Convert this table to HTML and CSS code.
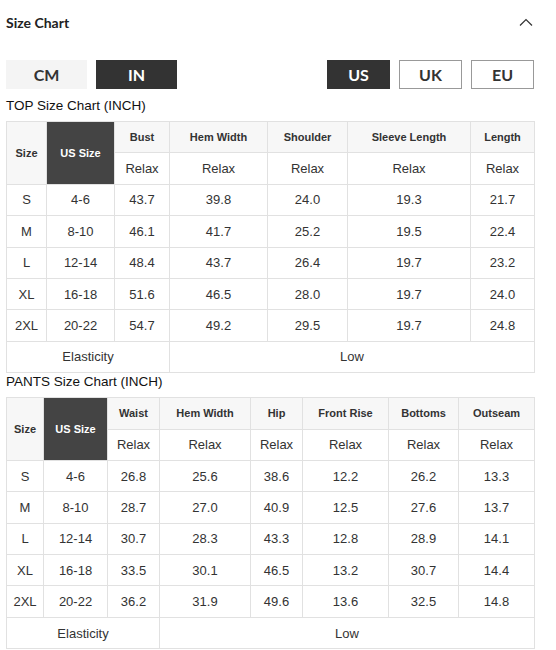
FILE: index.html
```html
<!DOCTYPE html>
<html>
  <head>
    <meta name="viewport" content="width=device-width, initial-scale=1.0">
    <link rel="stylesheet" href="styles.css">
  </head>
  <body>
    <div class="size-chart">
      <div class="chart-head">
        <span class="chart-title">Size Chart</span>
        <svg class="chevron" width="14" height="8" viewBox="0 0 14 8">
          <polyline points="1,7.5 7,1.5 13,7.5" fill="none" stroke="#333" stroke-width="1.2"/>
        </svg>
      </div>

      <div class="toggles">
        <div class="group">
          <button class="unit">CM</button>
          <button class="unit on">IN</button>
        </div>
        <div class="group">
          <button class="region on">US</button>
          <button class="region">UK</button>
          <button class="region">EU</button>
        </div>
      </div>

      <h3 class="table-title">TOP Size Chart (INCH)</h3>
      <table class="sizes">
        <colgroup>
          <col style="width:40px"><col style="width:68px"><col style="width:55px"><col style="width:98px">
          <col style="width:80px"><col style="width:123px"><col style="width:64px">
        </colgroup>
        <tr class="head">
          <th rowspan="2">Size</th>
          <th rowspan="2" class="us">US Size</th>
          <th>Bust</th><th>Hem Width</th><th>Shoulder</th><th>Sleeve Length</th><th>Length</th>
        </tr>
        <tr><td>Relax</td><td>Relax</td><td>Relax</td><td>Relax</td><td>Relax</td></tr>
        <tr><td>S</td><td>4-6</td><td>43.7</td><td>39.8</td><td>24.0</td><td>19.3</td><td>21.7</td></tr>
        <tr><td>M</td><td>8-10</td><td>46.1</td><td>41.7</td><td>25.2</td><td>19.5</td><td>22.4</td></tr>
        <tr><td>L</td><td>12-14</td><td>48.4</td><td>43.7</td><td>26.4</td><td>19.7</td><td>23.2</td></tr>
        <tr><td>XL</td><td>16-18</td><td>51.6</td><td>46.5</td><td>28.0</td><td>19.7</td><td>24.0</td></tr>
        <tr><td>2XL</td><td>20-22</td><td>54.7</td><td>49.2</td><td>29.5</td><td>19.7</td><td>24.8</td></tr>
        <tr><td colspan="3">Elasticity</td><td colspan="4">Low</td></tr>
      </table>

      <h3 class="table-title">PANTS Size Chart (INCH)</h3>
      <table class="sizes">
        <colgroup>
          <col style="width:37px"><col style="width:64px"><col style="width:52px"><col style="width:91px">
          <col style="width:52px"><col style="width:86px"><col style="width:70px"><col style="width:76px">
        </colgroup>
        <tr class="head">
          <th rowspan="2">Size</th>
          <th rowspan="2" class="us">US Size</th>
          <th>Waist</th><th>Hem Width</th><th>Hip</th><th>Front Rise</th><th>Bottoms</th><th>Outseam</th>
        </tr>
        <tr><td>Relax</td><td>Relax</td><td>Relax</td><td>Relax</td><td>Relax</td><td>Relax</td></tr>
        <tr><td>S</td><td>4-6</td><td>26.8</td><td>25.6</td><td>38.6</td><td>12.2</td><td>26.2</td><td>13.3</td></tr>
        <tr><td>M</td><td>8-10</td><td>28.7</td><td>27.0</td><td>40.9</td><td>12.5</td><td>27.6</td><td>13.7</td></tr>
        <tr><td>L</td><td>12-14</td><td>30.7</td><td>28.3</td><td>43.3</td><td>12.8</td><td>28.9</td><td>14.1</td></tr>
        <tr><td>XL</td><td>16-18</td><td>33.5</td><td>30.1</td><td>46.5</td><td>13.2</td><td>30.7</td><td>14.4</td></tr>
        <tr><td>2XL</td><td>20-22</td><td>36.2</td><td>31.9</td><td>49.6</td><td>13.6</td><td>32.5</td><td>14.8</td></tr>
        <tr><td colspan="3">Elasticity</td><td colspan="5">Low</td></tr>
      </table>
    </div>
  </body>
</html>
```

FILE: styles.css
```css
/* Size chart panel */
body {
  margin: 0;
  background: #fff;
}
.size-chart {
  width: 528px;
  margin-left: 6px;
  font-family: "Liberation Sans", Arial, sans-serif;
  color: #333;
}
.chart-head {
  height: 44px;
  display: flex;
  justify-content: space-between;
  align-items: center;
}
.chart-title {
  font-family: Lato, sans-serif;
  font-weight: bold;
  font-size: 14px;
  color: #222;
}
.chevron {
  margin-right: 1px;
  margin-top: -1px;
}

/* unit / region buttons */
.toggles {
  display: flex;
  justify-content: space-between;
  margin-top: 16px;
  margin-bottom: 8px;
}
.toggles .group {
  display: flex;
  gap: 9px;
}
.toggles button {
  height: 29px;
  padding: 0;
  border: none;
  box-sizing: border-box;
  font-family: Lato, sans-serif;
  font-weight: bold;
  font-size: 16px;
  color: #333;
}
.toggles .unit {
  width: 81px;
  background-color: #f4f4f4;
}
.toggles .region {
  width: 63px;
  background-color: #fff;
  border: 1px solid #999;
}
.toggles button.on {
  background-color: #333;
  border: none;
  color: #fff;
}

/* tables */
.table-title {
  margin: 0 0 7px;
  font-size: 13.5px;
  line-height: 17px;
  font-weight: normal;
  color: #111;
}
.sizes {
  width: 528px;
  table-layout: fixed;
  border-collapse: collapse;
  text-align: center;
  font-size: 13px;
}
.sizes tr {
  height: 31.4px;
}
.sizes th,
.sizes td {
  border: 1px solid #e1e1e1;
  padding: 0;
}
.sizes th {
  font-size: 11px;
  font-weight: bold;
  background-color: #f7f7f7;
  color: #333;
}
.sizes th.us {
  background-color: #444;
  color: #fff;
}
```
